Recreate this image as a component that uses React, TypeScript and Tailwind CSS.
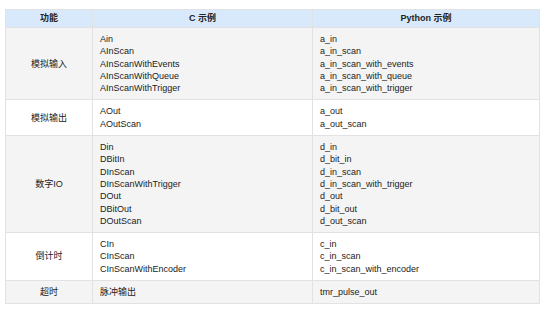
import React from "react";

type Row = {
  feature: string;
  c: string[];
  py: string[];
};

const rows: Row[] = [
  {
    feature: "模拟输入",
    c: ["Ain", "AInScan", "AInScanWithEvents", "AInScanWithQueue", "AInScanWithTrigger"],
    py: ["a_in", "a_in_scan", "a_in_scan_with_events", "a_in_scan_with_queue", "a_in_scan_with_trigger"],
  },
  {
    feature: "模拟输出",
    c: ["AOut", "AOutScan"],
    py: ["a_out", "a_out_scan"],
  },
  {
    feature: "数字IO",
    c: ["Din", "DBitIn", "DInScan", "DInScanWithTrigger", "DOut", "DBitOut", "DOutScan"],
    py: ["d_in", "d_bit_in", "d_in_scan", "d_in_scan_with_trigger", "d_out", "d_bit_out", "d_out_scan"],
  },
  {
    feature: "倒计时",
    c: ["CIn", "CInScan", "CInScanWithEncoder"],
    py: ["c_in", "c_in_scan", "c_in_scan_with_encoder"],
  },
  {
    feature: "超时",
    c: ["脉冲输出"],
    py: ["tmr_pulse_out"],
  },
];

const font = {
  fontFamily: '"Liberation Sans", Arial, "Noto Sans CJK SC", sans-serif',
};

const App = () => {
  return (
    <div className="w-[554px] h-[311px] bg-white pt-[9px] pl-[5px]" style={font}>
      <table className="border-collapse text-[9px] leading-[12.3px] text-[#222]">
        <colgroup>
          <col className="w-[87px]" />
          <col className="w-[220px]" />
          <col className="w-[227px]" />
        </colgroup>
        <thead>
          <tr className="bg-[#d7e9fb] h-[18px]">
            <th className="border border-[#e2e2e2] font-bold text-center py-0">功能</th>
            <th className="border border-[#e2e2e2] font-bold text-center py-0">C 示例</th>
            <th className="border border-[#e2e2e2] font-bold text-center py-0">Python 示例</th>
          </tr>
        </thead>
        <tbody>
          {rows.map((row, i) => (
            <tr key={row.feature} className={i % 2 === 0 ? "bg-[#f4f4f4]" : "bg-white"}>
              <td className="border border-[#e2e2e2] text-center align-middle">{row.feature}</td>
              <td className="border border-[#e2e2e2] py-[5px] pl-[7px] align-middle">
                {row.c.map((line) => (
                  <div key={line}>{line}</div>
                ))}
              </td>
              <td className="border border-[#e2e2e2] py-[5px] pl-[7px] align-middle">
                {row.py.map((line) => (
                  <div key={line}>{line}</div>
                ))}
              </td>
            </tr>
          ))}
        </tbody>
      </table>
    </div>
  );
};

export default App;
